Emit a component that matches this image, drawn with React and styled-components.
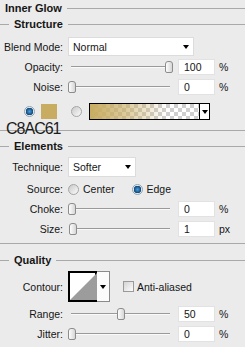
import styled, { createGlobalStyle } from "styled-components"

const GlobalStyle = createGlobalStyle`
  html, body {
    margin: 0;
    padding: 0;
    background: #ebebeb;
  }
  body {
    font-family: "Liberation Sans", Arial, sans-serif;
    font-size: 10.5px;
    color: #151515;
  }
`

const LINE = "#a9a9a9"

function Arrow() {
    return <Tri />
}

function SliderRow({ label, value, unit, mt }) {
    const left = Math.round((value / 100) * 97)
    return (
        <Row $mt={mt}>
            <Label>{label}</Label>
            <Slider>
                <Thumb style={{ left }} />
            </Slider>
            <NumInput>{value}</NumInput>
            <Unit>{unit}</Unit>
        </Row>
    )
}

export default function App() {
    return (
        <Panel>
            <GlobalStyle />
            <Title>Inner Glow</Title>

            <GroupHeader>Structure</GroupHeader>
            <Row $h={19} $mt={5}>
                <Label>Blend Mode:</Label>
                <Select $w={126}>Normal<Arrow /></Select>
            </Row>
            <SliderRow label="Opacity:" value={100} unit="%" mt={3} />
            <SliderRow label="Noise:" value={0} unit="%" mt={4} />
            <ColorRow>
                <Radio $on />
                <Swatch />
                <Radio />
                <GradientPick>
                    <GradientFill />
                    <GradientArrow><Arrow /></GradientArrow>
                </GradientPick>
            </ColorRow>
            <Rule $mt={10} />
            <Note>C8AC61</Note>

            <GroupHeader $mt={7}>Elements</GroupHeader>
            <Row $h={20} $mt={3}>
                <Label>Technique:</Label>
                <Select $w={68}>Softer<Arrow /></Select>
            </Row>
            <Row $h={14} $mt={5}>
                <Label>Source:</Label>
                <Choice>
                    <Radio />
                    <span>Center</span>
                </Choice>
                <Choice $ml={17}>
                    <Radio $on />
                    <span>Edge</span>
                </Choice>
            </Row>
            <SliderRow label="Choke:" value={0} unit="%" mt={5} />
            <SliderRow label="Size:" value={1} unit="px" mt={4} />
            <Rule $mt={6} />

            <GroupHeader $mt={8}>Quality</GroupHeader>
            <Row $h={31} $mt={3}>
                <Label>Contour:</Label>
                <Contour>
                    <ContourPreview>
                        <svg width="27" height="27" viewBox="0 0 27 27">
                            <polygon points="0,27 27,0 27,27" fill="#9c9c9c" />
                        </svg>
                    </ContourPreview>
                    <ContourDrop><Arrow /></ContourDrop>
                </Contour>
                <Check />
                <span>Anti-aliased</span>
            </Row>
            <SliderRow label="Range:" value={50} unit="%" mt={4} />
            <SliderRow label="Jitter:" value={0} unit="%" mt={4} />
        </Panel>
    )
}

const Panel = styled.div`
    position: relative;
    width: 245px;
    height: 347px;
    overflow: hidden;
    display: flex;
    flex-direction: column;
`

const Title = styled.div`
    display: flex;
    align-items: center;
    gap: 5px;
    height: 16px;
    padding-left: 5px;
    font-size: 11px;
    font-weight: bold;

    &::after {
        content: "";
        flex: 1;
        height: 1px;
        background: ${LINE};
    }
`

const GroupHeader = styled.div`
    display: flex;
    align-items: center;
    gap: 5px;
    height: 16px;
    margin-top: ${p => p.$mt || 0}px;
    font-size: 11px;
    font-weight: bold;

    &::before {
        content: "";
        width: 9px;
        height: 1px;
        background: ${LINE};
    }
    &::after {
        content: "";
        flex: 1;
        height: 1px;
        background: ${LINE};
    }
`

const Rule = styled.div`
    height: 1px;
    margin-top: ${p => p.$mt || 0}px;
    background: ${LINE};
`

const Row = styled.div`
    display: flex;
    align-items: center;
    height: ${p => p.$h || 16}px;
    margin-top: ${p => p.$mt || 0}px;
`

const Label = styled.span`
    flex: none;
    width: 63px;
    margin-right: 5px;
    text-align: right;
    white-space: nowrap;
`

const Select = styled.div`
    display: flex;
    align-items: center;
    justify-content: space-between;
    box-sizing: border-box;
    width: ${p => p.$w}px;
    height: 100%;
    padding: 0 4px 0 4px;
    background: #fff;
    border: 1px solid #dcdcdc;
`

const Tri = styled.span`
    width: 0;
    height: 0;
    border-left: 3.5px solid transparent;
    border-right: 3.5px solid transparent;
    border-top: 4px solid #000;
`

const Slider = styled.div`
    position: relative;
    flex: none;
    width: 105px;
    height: 16px;

    &::before {
        content: "";
        position: absolute;
        left: 3px;
        right: 3px;
        top: 7px;
        height: 1px;
        background: #9a9a9a;
        border-bottom: 1px solid #fafafa;
    }
`

const Thumb = styled.div`
    position: absolute;
    top: 2px;
    box-sizing: border-box;
    width: 8px;
    height: 12px;
    border: 1px solid #8c8c8c;
    border-radius: 3px 3px 2px 2px;
    background: linear-gradient(to right, #fdfdfd, #d6d6d6);
`

const NumInput = styled.div`
    display: flex;
    align-items: center;
    box-sizing: border-box;
    width: 37px;
    height: 16px;
    margin-left: 5px;
    padding-left: 5px;
    background: #fff;
    border: 1px solid #e2e2e2;
`

const Unit = styled.span`
    margin-left: 4px;
`

const ColorRow = styled.div`
    display: flex;
    align-items: center;
    height: 17px;
    margin-top: 8px;
    padding-left: 24px;
`

const Radio = styled.span`
    flex: none;
    box-sizing: border-box;
    width: 11px;
    height: 11px;
    border-radius: 50%;
    border: 1px solid ${p => (p.$on ? "#8fa3b3" : "#a5a5a5")};
    background: ${p =>
        p.$on
            ? "radial-gradient(circle, #4b9be0 0, #2a6fa8 2px, #13466e 3.5px, #e4ebf1 4px)"
            : "linear-gradient(135deg, #c9c9c9, #fbfbfb)"};
`

const Swatch = styled.span`
    width: 16px;
    height: 15px;
    margin: 0 14px 0 6px;
    background: #c8ac61;
`

const GradientPick = styled.div`
    display: flex;
    box-sizing: border-box;
    width: 121px;
    height: 17px;
    margin-left: 7px;
    border: 1px solid #000;
`

const GradientFill = styled.div`
    flex: 1;
    background:
        linear-gradient(to right, #c8ac61 0%, rgba(200, 172, 97, 0.6) 35%, rgba(200, 172, 97, 0) 70%),
        repeating-conic-gradient(#cfcfcf 0 25%, #ffffff 0 50%) 0 0 / 8px 8px;
`

const GradientArrow = styled.div`
    display: flex;
    align-items: center;
    justify-content: center;
    width: 9px;
    background: #fff;
    border-left: 1px solid #000;
`

const Note = styled.div`
    position: absolute;
    left: 6px;
    top: 121px;
    font-size: 16px;
    line-height: 16px;
    letter-spacing: -1px;
    color: #1c1c1c;
`

const Choice = styled.span`
    display: flex;
    align-items: center;
    gap: 4px;
    margin-left: ${p => p.$ml || 0}px;
`

const Contour = styled.div`
    display: flex;
    height: 31px;
`

const ContourPreview = styled.div`
    box-sizing: border-box;
    width: 29px;
    height: 31px;
    background: #fff;
    border: 2px solid #000;

    svg {
        display: block;
    }
`

const ContourDrop = styled.div`
    display: flex;
    align-items: center;
    justify-content: center;
    box-sizing: border-box;
    width: 13px;
    height: 31px;
    background: #fbfbfb;
    border: 1px solid #8a8a8a;
    border-left: none;
`

const Check = styled.span`
    box-sizing: border-box;
    width: 11px;
    height: 11px;
    margin: 0 3px 0 13px;
    border: 1px solid #9a9a9a;
    background: linear-gradient(135deg, #d4d4d4, #fcfcfc);
`
